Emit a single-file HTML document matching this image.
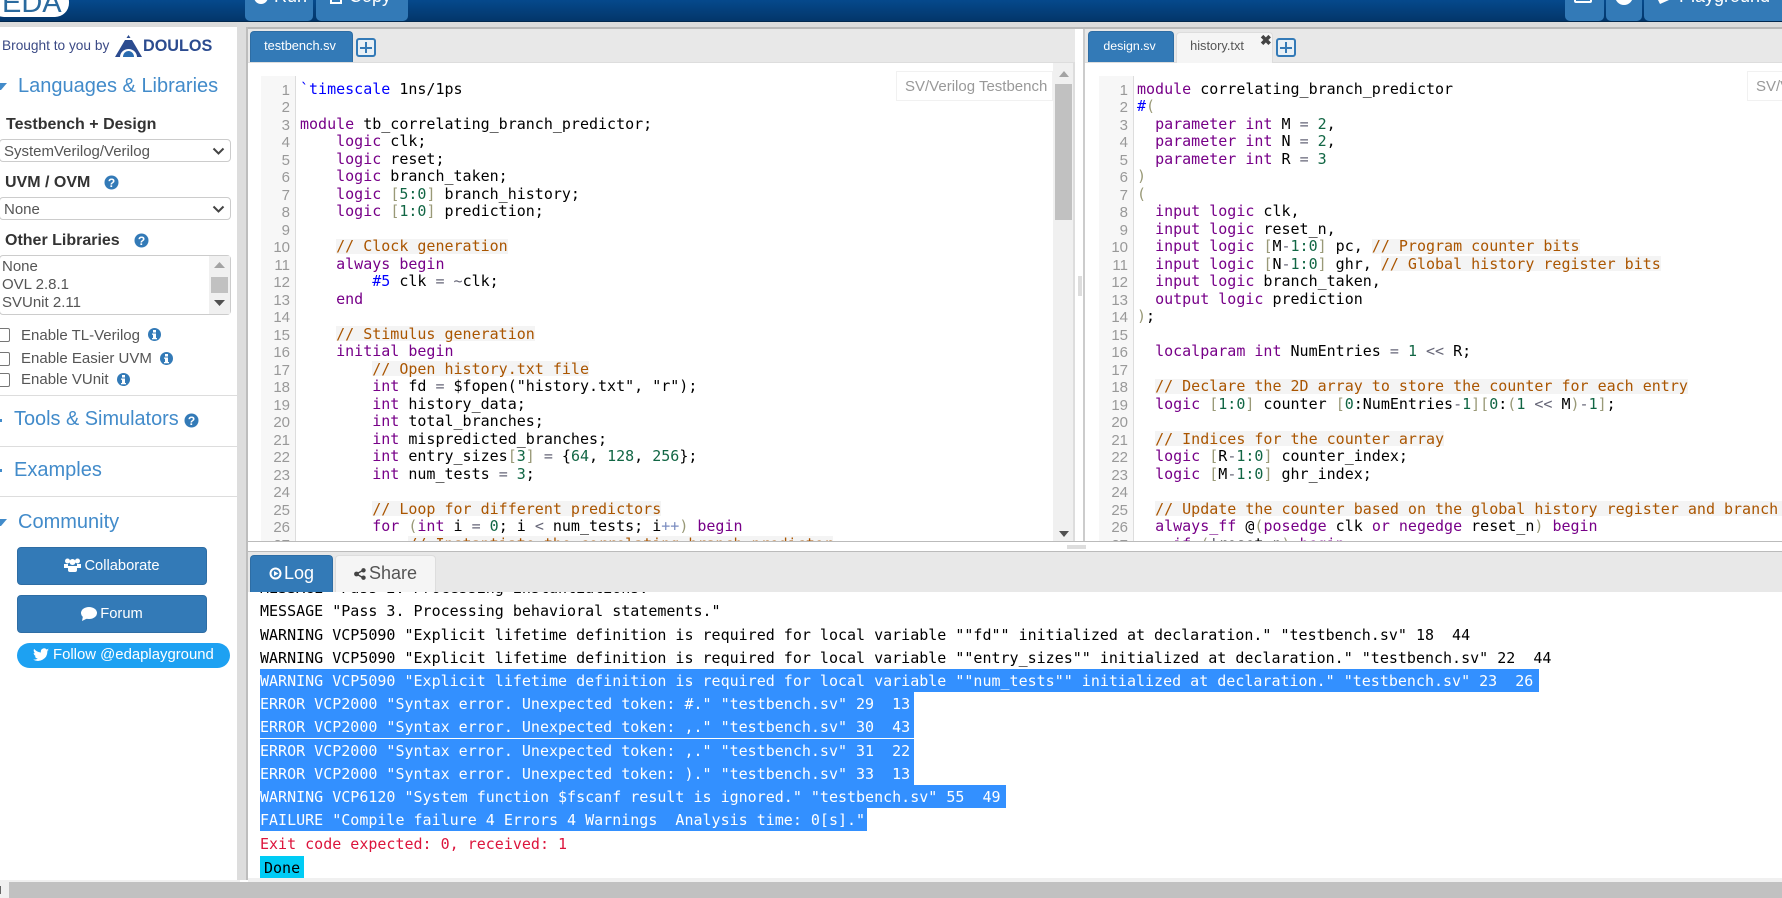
<!DOCTYPE html>
<html><head><meta charset="utf-8"><title>EDA Playground</title>
<style>
*{box-sizing:border-box}
html,body{margin:0;padding:0;width:1782px;height:898px;overflow:hidden;background:#fff;font-family:"Liberation Sans",sans-serif}
.a{position:absolute}
.t{position:absolute;white-space:pre;line-height:1}
.hdr{left:0;top:0;width:1782px;height:22px;background:linear-gradient(#05498c,#03366a);border-bottom:1px solid #02284e;overflow:hidden}
.tb{position:absolute;top:-13px;height:34px;background:#337ab7;border-radius:5px;color:#fff;font-size:18px;line-height:18px;padding-top:0;white-space:pre}
.sel{position:absolute;height:23px;border:1px solid #ccc;border-radius:4px;background:#fff;left:-1px;width:232px;color:#555;font-size:15px;line-height:24px;padding-left:4px}
.sel svg{position:absolute;right:5px;top:7px}
.hd{color:#428bca;font-size:20px}
.hr{position:absolute;left:0;width:237px;height:1px;background:#ddd}
.btn{position:absolute;left:17px;width:190px;height:38px;background:#337ab7;border:1px solid #2e6da4;border-radius:4px;color:#fff;font-size:14.7px;text-align:center;line-height:36px}
.cb{position:absolute;left:-4px;width:14px;height:14px;border:1px solid #767676;border-radius:2px;background:#fff}
.lab{color:#555;font-size:15px}
.tab{position:absolute;background:#337ab7;border:1px solid #2e6da4;border-bottom:0;border-radius:4px 4px 0 0;color:#fff;font-size:12.8px;text-align:center}
.plus{position:absolute;width:20px;height:19px;border:2px solid #337ab7;border-radius:3px;background:#e8f0f6}
.plus:before{content:"";position:absolute;left:2px;right:2px;top:6.5px;height:2px;background:#337ab7}
.plus:after{content:"";position:absolute;top:2px;bottom:2px;left:7px;width:2px;background:#337ab7}
.ed{position:absolute;top:76px;height:465px;overflow:hidden}
.gut{position:absolute;top:76px;height:465px;width:35px;background:#f7f7f7;border-right:1px solid #ddd;overflow:hidden;color:#999;font-size:15px;text-align:right;padding:5.5px 5px 0 0;line-height:17.5px}
.code{font-family:"DejaVu Sans Mono",monospace;font-size:15px;line-height:17.5px;white-space:pre;padding-top:4.55px;color:#000}
.gut div,.code div{height:17.5px}
.k{color:#708}.c{color:#a50;background:linear-gradient(#f4f4f4,#f4f4f4) 0 50%/100% 15px no-repeat}.n{color:#164}.b{color:#997}.d{color:#00f}.o{color:#667}.p{color:#7a8cc0}
.lbl{position:absolute;top:71px;height:30px;border:1px solid #f1f1f1;background:#fff;color:#999;font-size:15px;line-height:29px;padding-left:8px;white-space:nowrap;overflow:hidden}
.log{position:absolute;left:260px;font-family:"DejaVu Sans Mono",monospace;font-size:15px;line-height:25px;height:23px;white-space:pre;color:#000}
.log.s span{display:inline-block;height:23px;background:#3390ff;color:#fff;padding-right:5px}
</style></head><body>

<div class="a hdr"></div>
<div class="a" style="left:-10px;top:-12px;width:79px;height:29px;background:#fff;border-radius:14px"></div>
<div class="t" style="left:2px;top:-11px;font-size:29px;color:#2a6a9e">EDA</div>
<div class="tb" style="left:245px;width:68px;padding-left:29px">Run</div>
<svg class="a" style="left:254px;top:0" width="14" height="4"><circle cx="7" cy="-3" r="7" fill="#fff"/></svg>
<div class="tb" style="left:316px;width:92px;padding-left:33px">Copy</div>
<div class="a" style="left:330px;top:-6px;width:12px;height:10px;border:2px solid #fff"></div>
<div class="tb" style="left:1565px;width:39px"></div>
<div class="a" style="left:1574px;top:-6px;width:18px;height:9px;border:2px solid #fff;border-radius:2px"></div>
<div class="tb" style="left:1606px;width:36px"></div>
<svg class="a" style="left:1614px;top:0" width="20" height="6"><circle cx="10" cy="-4" r="9" fill="#fff"/></svg>
<div class="tb" style="left:1644px;width:150px;padding-left:35px">Playground</div>
<svg class="a" style="left:1658px;top:0" width="12" height="4"><path d="M0 0H11L2 4Z" fill="#fff"/></svg>

<!-- frame -->
<div class="a" style="left:0;top:22px;width:1782px;height:5px;background:#dcdcdc"></div>
<div class="a" style="left:240px;top:27px;width:1542px;height:2px;background:#b8b8b8"></div>
<div class="a" style="left:237px;top:22px;width:9px;height:858px;background:#ddd"></div>
<div class="a" style="left:246px;top:27px;width:2px;height:853px;background:#bdbdbd"></div>

<!-- sidebar -->
<div class="t" style="left:2px;top:39px;font-size:13.7px;color:#3b4a85">Brought to you by</div>
<svg class="a" style="left:115px;top:34px" width="27" height="24" viewBox="0 0 27 24"><path d="M13.500 1l2 3h-4zM10 6h7l10 17h-5a8.500 8 0 0 0-17 0H0z" fill="#2b4b8f"/><path d="M8 23a5.500 6 0 0 1 11 0z" fill="#2b6cb0"/></svg>
<div class="t" style="left:143px;top:38px;font-size:16.2px;font-weight:bold;color:#2b4b8f">DOULOS</div>

<svg class="a" style="left:0;top:83px" width="8" height="7"><path d="M0 0H7L1 7H0Z" fill="#428bca"/></svg>
<div class="t hd" style="left:18px;top:76px">Languages &amp; Libraries</div>
<div class="t" style="left:6px;top:117px;font-size:16px;font-weight:bold;color:#333">Testbench + Design</div>
<div class="sel" style="top:139px">SystemVerilog/Verilog<svg width="13" height="9"><path d="M1.500 1.500L6.500 6.500L11.500 1.500" fill="none" stroke="#444" stroke-width="2"/></svg></div>
<div class="t" style="left:5px;top:175px;font-size:16px;font-weight:bold;color:#333">UVM / OVM</div>
<svg class="a" style="left:104px;top:175px" width="15" height="15"><circle cx="7.500" cy="7.500" r="7" fill="#337ab7"/><text x="7.500" y="12" font-family="Liberation Sans" font-size="12" font-weight="bold" fill="#fff" text-anchor="middle">?</text></svg>
<div class="sel" style="top:197px">None<svg width="13" height="9"><path d="M1.500 1.500L6.500 6.500L11.500 1.500" fill="none" stroke="#444" stroke-width="2"/></svg></div>
<div class="t" style="left:5px;top:233px;font-size:16px;font-weight:bold;color:#333">Other Libraries</div>
<svg class="a" style="left:134px;top:233px" width="15" height="15"><circle cx="7.500" cy="7.500" r="7" fill="#337ab7"/><text x="7.500" y="12" font-family="Liberation Sans" font-size="12" font-weight="bold" fill="#fff" text-anchor="middle">?</text></svg>
<div class="a" style="left:-1px;top:255px;width:232px;height:60px;border:1px solid #ccc;border-radius:4px;background:#fff"></div>
<div class="a" style="left:209px;top:256px;width:21px;height:58px;background:#f0f0f0"></div>
<div class="a" style="left:211px;top:277px;width:17px;height:16px;background:#c1c1c1"></div>
<svg class="a" style="left:214px;top:262px" width="11" height="6"><path d="M5.500 0L11 6H0Z" fill="#a3a3a3"/></svg>
<svg class="a" style="left:214px;top:300px" width="11" height="6"><path d="M0 0H11L5.500 6Z" fill="#505050"/></svg>
<div class="t lab" style="left:2px;top:259px">None</div>
<div class="t lab" style="left:2px;top:277px">OVL 2.8.1</div>
<div class="t lab" style="left:2px;top:295px">SVUnit 2.11</div>

<div class="cb" style="top:328px"></div>
<div class="t lab" style="left:21px;top:328px">Enable TL-Verilog</div>
<svg class="a" style="left:148px;top:328px" width="13" height="13"><circle cx="6.500" cy="6.500" r="6.500" fill="#337ab7"/><rect x="5" y="2" width="3" height="2.500" fill="#fff"/><path d="M4 5.500h4v4.500h1v1.200H4V10h1V6.700H4z" fill="#fff"/></svg>
<div class="cb" style="top:352px"></div>
<div class="t lab" style="left:21px;top:351px">Enable Easier UVM</div>
<svg class="a" style="left:160px;top:352px" width="13" height="13"><circle cx="6.500" cy="6.500" r="6.500" fill="#337ab7"/><rect x="5" y="2" width="3" height="2.500" fill="#fff"/><path d="M4 5.500h4v4.500h1v1.200H4V10h1V6.700H4z" fill="#fff"/></svg>
<div class="cb" style="top:373px"></div>
<div class="t lab" style="left:21px;top:372px">Enable VUnit</div>
<svg class="a" style="left:117px;top:373px" width="13" height="13"><circle cx="6.500" cy="6.500" r="6.500" fill="#337ab7"/><rect x="5" y="2" width="3" height="2.500" fill="#fff"/><path d="M4 5.500h4v4.500h1v1.200H4V10h1V6.700H4z" fill="#fff"/></svg>

<div class="hr" style="top:395px"></div>
<div class="a" style="left:0;top:419px;width:2px;height:3px;background:#428bca"></div>
<div class="t hd" style="left:14px;top:410px;font-size:19.9px">Tools &amp; Simulators</div>
<svg class="a" style="left:184px;top:413px" width="15" height="15"><circle cx="7.500" cy="7.500" r="7" fill="#337ab7"/><text x="7.500" y="12" font-family="Liberation Sans" font-size="12" font-weight="bold" fill="#fff" text-anchor="middle">?</text></svg>
<div class="hr" style="top:446px"></div>
<div class="a" style="left:0;top:469px;width:2px;height:3px;background:#428bca"></div>
<div class="t hd" style="left:14px;top:460px">Examples</div>
<div class="hr" style="top:496px"></div>
<svg class="a" style="left:0;top:519px" width="8" height="7"><path d="M0 0H7L1 7H0Z" fill="#428bca"/></svg>
<div class="t hd" style="left:18px;top:512px">Community</div>

<div class="btn" style="top:547px"><svg width="17" height="14" viewBox="0 0 17 14" style="vertical-align:-2px;margin-right:3px"><circle cx="3.500" cy="3" r="2.500" fill="#fff"/><circle cx="13.500" cy="3" r="2.500" fill="#fff"/><circle cx="8.500" cy="4" r="3" fill="#fff"/><path d="M0 6h4v4H0zM13 6h4v4h-4z" fill="#fff"/><path d="M4 8h9v4a2 2 0 0 1-2 2H6a2 2 0 0 1-2-2z" fill="#fff"/></svg>Collaborate</div>
<div class="btn" style="top:595px"><svg width="16" height="14" viewBox="0 0 16 14" style="vertical-align:-3px;margin-right:3px"><ellipse cx="8" cy="6" rx="8" ry="6" fill="#fff"/><path d="M2 9L1 14L7 11Z" fill="#fff"/></svg>Forum</div>
<div class="a" style="left:17px;top:643px;width:213px;height:25px;background:#1da1f2;border-radius:13px"></div>
<svg class="a" style="left:33px;top:648px" width="16" height="14" viewBox="0 0 24 20"><path d="M24 2.400c-.9.400-1.800.7-2.800.8 1-.6 1.800-1.600 2.200-2.700-1 .6-2 1-3.100 1.200A4.900 4.900 0 0 0 11.900 6.200C7.800 6 4.200 4 1.700.9c-1.300 2.200-.6 5.100 1.500 6.500-.8 0-1.600-.2-2.200-.6 0 2.300 1.600 4.400 3.900 4.900-.7.200-1.500.2-2.200.1.600 2 2.400 3.400 4.600 3.400A9.900 9.900 0 0 1 0 16.700 14 14 0 0 0 21.500 4.300c1-.7 1.800-1.600 2.500-1.900z" fill="#fff"/></svg>
<div class="t" style="left:53px;top:648px;font-size:14.9px;color:#fff">Follow @edaplayground</div>

<!-- left editor -->
<div class="a" style="left:248px;top:29px;width:827px;height:34px;background:#e8e8e8;border-bottom:1px solid #ddd"></div>
<div class="tab" style="left:250px;top:31px;width:103px;height:31px;line-height:28px;padding-right:3px">testbench.sv</div>
<div class="plus" style="left:356px;top:38px"></div>
<div class="gut" style="left:261px"><div>1</div><div>2</div><div>3</div><div>4</div><div>5</div><div>6</div><div>7</div><div>8</div><div>9</div><div>10</div><div>11</div><div>12</div><div>13</div><div>14</div><div>15</div><div>16</div><div>17</div><div>18</div><div>19</div><div>20</div><div>21</div><div>22</div><div>23</div><div>24</div><div>25</div><div>26</div><div>27</div></div>
<div class="ed code" style="left:300px;width:750px"><div><span class="d">`timescale</span> 1ns/1ps</div><div> </div><div><span class="k">module</span> tb_correlating_branch_predictor;</div><div>    <span class="k">logic</span> clk;</div><div>    <span class="k">logic</span> reset;</div><div>    <span class="k">logic</span> branch_taken;</div><div>    <span class="k">logic</span> <span class="b">[</span><span class="n">5:0</span><span class="b">]</span> branch_history;</div><div>    <span class="k">logic</span> <span class="b">[</span><span class="n">1:0</span><span class="b">]</span> prediction;</div><div> </div><div>    <span class="c">// Clock generation</span></div><div>    <span class="k">always</span> <span class="k">begin</span></div><div>        <span class="d">#5</span> clk <span class="o">=</span> <span class="o">~</span>clk;</div><div>    <span class="k">end</span></div><div> </div><div>    <span class="c">// Stimulus generation</span></div><div>    <span class="k">initial</span> <span class="k">begin</span></div><div>        <span class="c">// Open history.txt file</span></div><div>        <span class="k">int</span> fd <span class="o">=</span> $fopen(<span>"history.txt"</span>, "r");</div><div>        <span class="k">int</span> history_data;</div><div>        <span class="k">int</span> total_branches;</div><div>        <span class="k">int</span> mispredicted_branches;</div><div>        <span class="k">int</span> entry_sizes<span class="b">[</span><span class="n">3</span><span class="b">]</span> <span class="o">=</span> {<span class="n">64</span>, <span class="n">128</span>, <span class="n">256</span>};</div><div>        <span class="k">int</span> num_tests <span class="o">=</span> <span class="n">3</span>;</div><div> </div><div>        <span class="c">// Loop for different predictors</span></div><div>        <span class="k">for</span> <span class="b">(</span><span class="k">int</span> i <span class="o">=</span> <span class="n">0</span>; i <span class="o">&lt;</span> num_tests; i<span class="p">++</span><span class="b">)</span> <span class="k">begin</span></div><div>            <span class="c">// Instantiate the correlating branch predictor</span></div></div>
<div class="a" style="left:1053px;top:63px;width:22px;height:478px;background:#f0f0f0;border-right:2px solid #ddd"></div>
<div class="a" style="left:1055px;top:84px;width:17px;height:136px;background:#c1c1c1"></div>
<svg class="a" style="left:1059px;top:71px" width="10" height="6"><path d="M5 0L10 6H0Z" fill="#a3a3a3"/></svg>
<svg class="a" style="left:1059px;top:531px" width="10" height="6"><path d="M0 0H10L5 6Z" fill="#505050"/></svg>
<div class="lbl" style="left:896px;width:157px">SV/Verilog Testbench</div>

<!-- splitter -->
<div class="a" style="left:1083px;top:29px;width:2px;height:512px;background:#ccc"></div>
<div class="a" style="left:1078px;top:276px;width:4px;height:20px;background:#ddd"></div>

<!-- right editor -->
<div class="a" style="left:1085px;top:29px;width:697px;height:34px;background:#e8e8e8;border-bottom:1px solid #ddd"></div>
<div class="tab" style="left:1088px;top:31px;width:86px;height:31px;line-height:28px;padding-right:3px;font-size:12.4px">design.sv</div>
<div class="tab" style="left:1176px;top:32px;width:97px;height:31px;line-height:26px;background:#f5f5f5;border-color:#ddd;color:#555;padding-right:15px">history.txt</div>
<div class="t" style="left:1260px;top:33px;font-size:14px;font-weight:bold;color:#444">✖</div>
<div class="plus" style="left:1276px;top:38px"></div>
<div class="gut" style="left:1099px"><div>1</div><div>2</div><div>3</div><div>4</div><div>5</div><div>6</div><div>7</div><div>8</div><div>9</div><div>10</div><div>11</div><div>12</div><div>13</div><div>14</div><div>15</div><div>16</div><div>17</div><div>18</div><div>19</div><div>20</div><div>21</div><div>22</div><div>23</div><div>24</div><div>25</div><div>26</div><div>27</div></div>
<div class="ed code" style="left:1137px;width:645px"><div><span class="k">module</span> correlating_branch_predictor</div><div><span class="d">#</span><span class="b">(</span></div><div>  <span class="k">parameter</span> <span class="k">int</span> M <span class="o">=</span> <span class="n">2</span>,</div><div>  <span class="k">parameter</span> <span class="k">int</span> N <span class="o">=</span> <span class="n">2</span>,</div><div>  <span class="k">parameter</span> <span class="k">int</span> R <span class="o">=</span> <span class="n">3</span></div><div><span class="b">)</span></div><div><span class="b">(</span></div><div>  <span class="k">input</span> <span class="k">logic</span> clk,</div><div>  <span class="k">input</span> <span class="k">logic</span> reset_n,</div><div>  <span class="k">input</span> <span class="k">logic</span> <span class="b">[</span>M<span class="o">-</span><span class="n">1:0</span><span class="b">]</span> pc, <span class="c">// Program counter bits</span></div><div>  <span class="k">input</span> <span class="k">logic</span> <span class="b">[</span>N<span class="o">-</span><span class="n">1:0</span><span class="b">]</span> ghr, <span class="c">// Global history register bits</span></div><div>  <span class="k">input</span> <span class="k">logic</span> branch_taken,</div><div>  <span class="k">output</span> <span class="k">logic</span> prediction</div><div><span class="b">)</span>;</div><div> </div><div>  <span class="k">localparam</span> <span class="k">int</span> NumEntries <span class="o">=</span> <span class="n">1</span> <span class="o">&lt;&lt;</span> R;</div><div> </div><div>  <span class="c">// Declare the 2D array to store the counter for each entry</span></div><div>  <span class="k">logic</span> <span class="b">[</span><span class="n">1:0</span><span class="b">]</span> counter <span class="b">[</span><span class="n">0</span>:NumEntries<span class="o">-</span><span class="n">1</span><span class="b">][</span><span class="n">0</span>:<span class="b">(</span><span class="n">1</span> <span class="o">&lt;&lt;</span> M<span class="b">)</span><span class="o">-</span><span class="n">1</span><span class="b">]</span>;</div><div> </div><div>  <span class="c">// Indices for the counter array</span></div><div>  <span class="k">logic</span> <span class="b">[</span>R<span class="o">-</span><span class="n">1:0</span><span class="b">]</span> counter_index;</div><div>  <span class="k">logic</span> <span class="b">[</span>M<span class="o">-</span><span class="n">1:0</span><span class="b">]</span> ghr_index;</div><div> </div><div>  <span class="c">// Update the counter based on the global history register and branch outcome</span></div><div>  <span class="k">always_ff</span> @<span class="b">(</span><span class="k">posedge</span> clk <span class="k">or</span> <span class="k">negedge</span> reset_n<span class="b">)</span> <span class="k">begin</span></div><div>    <span class="k">if</span> <span class="b">(</span><span class="o">!</span>reset_n<span class="b">)</span> <span class="k">begin</span></div></div>
<div class="lbl" style="left:1747px;width:40px">SV/Verilog Design</div>

<!-- resize strip -->
<div class="a" style="left:248px;top:541px;width:1534px;height:1px;background:#bbb"></div>
<div class="a" style="left:1067px;top:545px;width:19px;height:4px;background:#ddd"></div>
<div class="a" style="left:248px;top:551px;width:1534px;height:1px;background:#bbb"></div>

<!-- log text first so header overlaps -->
<div class="log" style="top:576px">MESSAGE "Pass 2. Processing instantiations."</div>
<div class="a" style="left:248px;top:552px;width:1534px;height:40px;background:#e8e8e8"></div>
<div class="a" style="left:250px;top:555px;width:83px;height:37px;background:#337ab7;border:1px solid #2e6da4;border-bottom:0;border-radius:4px 4px 0 0"></div>
<svg class="a" style="left:269px;top:567px" width="13" height="13"><circle cx="6.500" cy="6.500" r="5" fill="none" stroke="#fff" stroke-width="2"/><path d="M5 4L9.500 6.500L5 9Z" fill="#fff"/></svg>
<div class="t" style="left:284px;top:564px;font-size:18px;color:#fff">Log</div>
<div class="a" style="left:335px;top:555px;width:101px;height:37px;background:#f5f5f5;border:1px solid #ddd;border-bottom:0;border-radius:4px 4px 0 0"></div>
<svg class="a" style="left:354px;top:568px" width="12" height="12"><path d="M9.500 2L2.500 6L9.500 10" fill="none" stroke="#444" stroke-width="1.500"/><circle cx="9.500" cy="2.300" r="2.200" fill="#444"/><circle cx="2.500" cy="6" r="2.400" fill="#444"/><circle cx="9.500" cy="9.700" r="2.200" fill="#444"/></svg>
<div class="t" style="left:369px;top:564px;font-size:18px;color:#555">Share</div>

<div class="log" style="top:599px">MESSAGE "Pass 3. Processing behavioral statements."</div>
<div class="log" style="top:623px">WARNING VCP5090 "Explicit lifetime definition is required for local variable ""fd"" initialized at declaration." "testbench.sv" 18  44</div>
<div class="log" style="top:646px">WARNING VCP5090 "Explicit lifetime definition is required for local variable ""entry_sizes"" initialized at declaration." "testbench.sv" 22  44</div>
<div class="log s" style="top:669px"><span style="padding-right:6px">WARNING VCP5090 "Explicit lifetime definition is required for local variable ""num_tests"" initialized at declaration." "testbench.sv" 23  26</span></div>
<div class="log s" style="top:692px"><span style="padding-right:4px">ERROR VCP2000 "Syntax error. Unexpected token: #." "testbench.sv" 29  13</span></div>
<div class="log s" style="top:715px"><span style="padding-right:4px">ERROR VCP2000 "Syntax error. Unexpected token: ,." "testbench.sv" 30  43</span></div>
<div class="log s" style="top:739px"><span style="padding-right:4px">ERROR VCP2000 "Syntax error. Unexpected token: ,." "testbench.sv" 31  22</span></div>
<div class="log s" style="top:762px"><span style="padding-right:4px">ERROR VCP2000 "Syntax error. Unexpected token: )." "testbench.sv" 33  13</span></div>
<div class="log s" style="top:785px"><span>WARNING VCP6120 "System function $fscanf result is ignored." "testbench.sv" 55  49</span></div>
<div class="log s" style="top:808px"><span style="padding-right:2px">FAILURE "Compile failure 4 Errors 4 Warnings  Analysis time: 0[s]."</span></div>
<div class="log" style="top:832px;color:#dc143c">Exit code expected: 0, received: 1</div>
<div class="log" style="top:856px;height:22px;line-height:24px;width:44px;background:#00ccf5;padding-left:4px">Done</div>

<!-- bottom scrollbar -->
<div class="a" style="left:0;top:880px;width:240px;height:2px;background:#f0f0f0"></div>
<div class="a" style="left:248px;top:878px;width:1534px;height:4px;background:#f0f0f0"></div>
<div class="a" style="left:0;top:882px;width:9px;height:16px;background:#f0f0f0"></div>
<div class="a" style="left:0;top:886px;width:1px;height:8px;background:#666"></div>
<div class="a" style="left:9px;top:882px;width:1773px;height:16px;background:#c1c1c1"></div>
</body></html>
